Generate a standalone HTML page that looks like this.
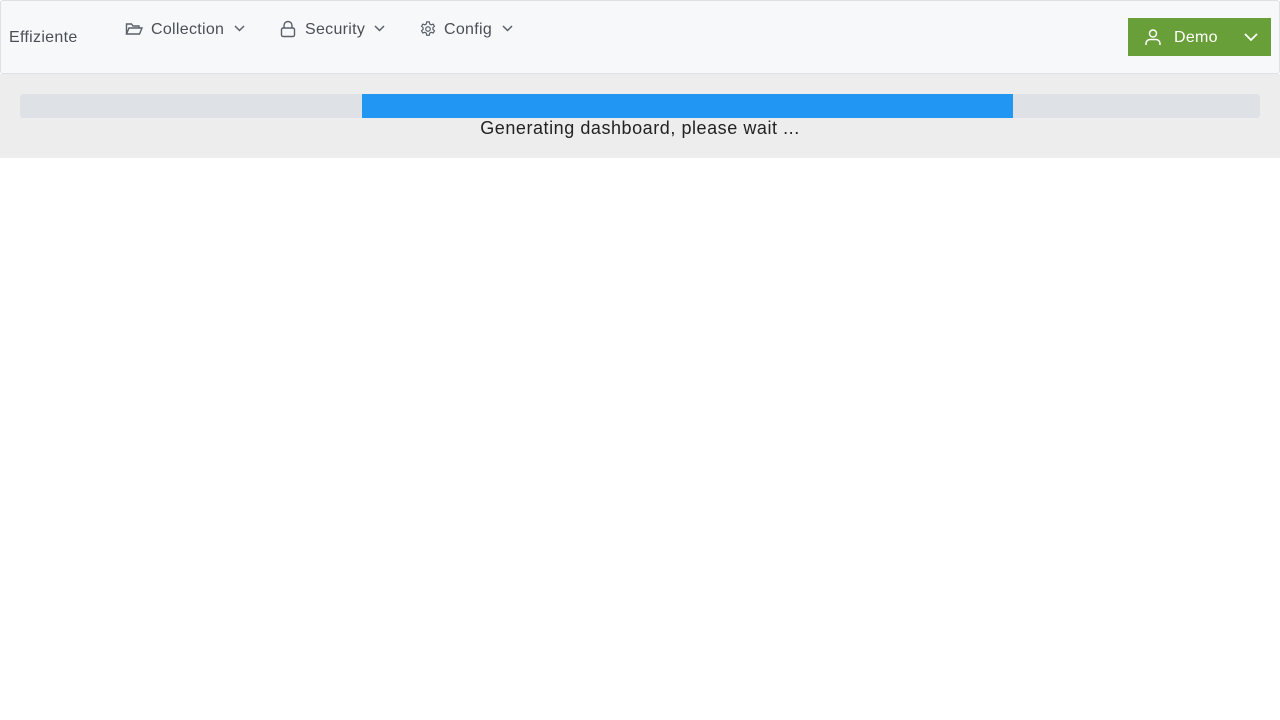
<!DOCTYPE html>
<html><head><style>
body{margin:0;width:1280px;height:720px;background:#fff;font-family:"Liberation Sans",sans-serif;position:relative;overflow:hidden}
.nav{position:absolute;left:0;top:0;width:1278px;height:72px;background:#f7f8fa;border:1px solid #dde0e4;border-radius:3px}
.t{position:absolute;color:#4a4f55;font-size:16px;white-space:nowrap;letter-spacing:0.3px}
svg{position:absolute}
.band{position:absolute;left:0;top:74px;width:1280px;height:84px;background:#ededed}
</style></head><body>
<div class="nav"></div>
<div class="t" style="left:9px;top:29px">Effiziente</div>
<svg style="left:125px;top:21px" width="18" height="16" viewBox="0 0 18 16" fill="none" stroke="#5a6068" stroke-width="1.4"><path d="M1.5 13V3h5l1.5 2h6v2"/><path d="M1.5 13l2.5-6h13l-2.5 6z"/></svg>
<div class="t" style="left:151px;top:21px">Collection</div>
<svg style="left:233px;top:23px" width="13" height="10" fill="none" stroke="#5a6068" stroke-width="1.5"><path d="M2 3l4.5 4.5L11 3"/></svg>
<svg style="left:279px;top:20px" width="18" height="18" fill="none" stroke="#5a6068" stroke-width="1.4"><path d="M5 8V5.5a4 4 0 0 1 8 0V8"/><rect x="2.5" y="8" width="13" height="8.5" rx="1.5"/></svg>
<div class="t" style="left:305px;top:21px">Security</div>
<svg style="left:373px;top:23px" width="13" height="10" fill="none" stroke="#5a6068" stroke-width="1.5"><path d="M2 3l4.5 4.5L11 3"/></svg>
<svg style="left:419px;top:20px" width="18" height="18" viewBox="0 0 24 24" fill="none" stroke="#5a6068" stroke-width="1.6"><circle cx="12" cy="12" r="3"/><path d="M10.3 2.5h3.4l.6 2.8 1.9 1.1 2.7-.9 1.7 2.9-2.1 1.9v2.2l2.1 1.9-1.7 2.9-2.7-.9-1.9 1.1-.6 2.8h-3.4l-.6-2.8-1.9-1.1-2.7.9-1.7-2.9 2.1-1.9v-2.2L3.4 8.4l1.7-2.9 2.7.9 1.9-1.1z"/></svg>
<div class="t" style="left:444px;top:21px">Config</div>
<svg style="left:501px;top:23px" width="13" height="10" fill="none" stroke="#5a6068" stroke-width="1.5"><path d="M2 3l4.5 4.5L11 3"/></svg>
<div style="position:absolute;left:1128px;top:18px;width:143px;height:38px;background:#689f38"></div>
<svg style="left:1144px;top:28px" width="18" height="18" fill="none" stroke="#fff" stroke-width="1.5"><circle cx="9" cy="5.5" r="3.5"/><path d="M2 17v-1.5a4 4 0 0 1 4-4h6a4 4 0 0 1 4 4V17"/></svg>
<div class="t" style="left:1174px;top:29px;color:#fff">Demo</div>
<svg style="left:1243px;top:31px" width="16" height="12" fill="none" stroke="#fff" stroke-width="1.8"><path d="M2 3l6 6 6-6"/></svg>
<div class="band"></div>
<div style="position:absolute;left:20px;top:94px;width:1240px;height:24px;background:#dee1e5;border-radius:3px"></div>
<div style="position:absolute;left:362px;top:94px;width:651px;height:24px;background:#2196f3"></div>
<div class="t" style="left:0;width:1280px;text-align:center;top:118px;font-size:18px;color:#222;letter-spacing:0.55px">Generating dashboard, please wait ...</div>
</body></html>
